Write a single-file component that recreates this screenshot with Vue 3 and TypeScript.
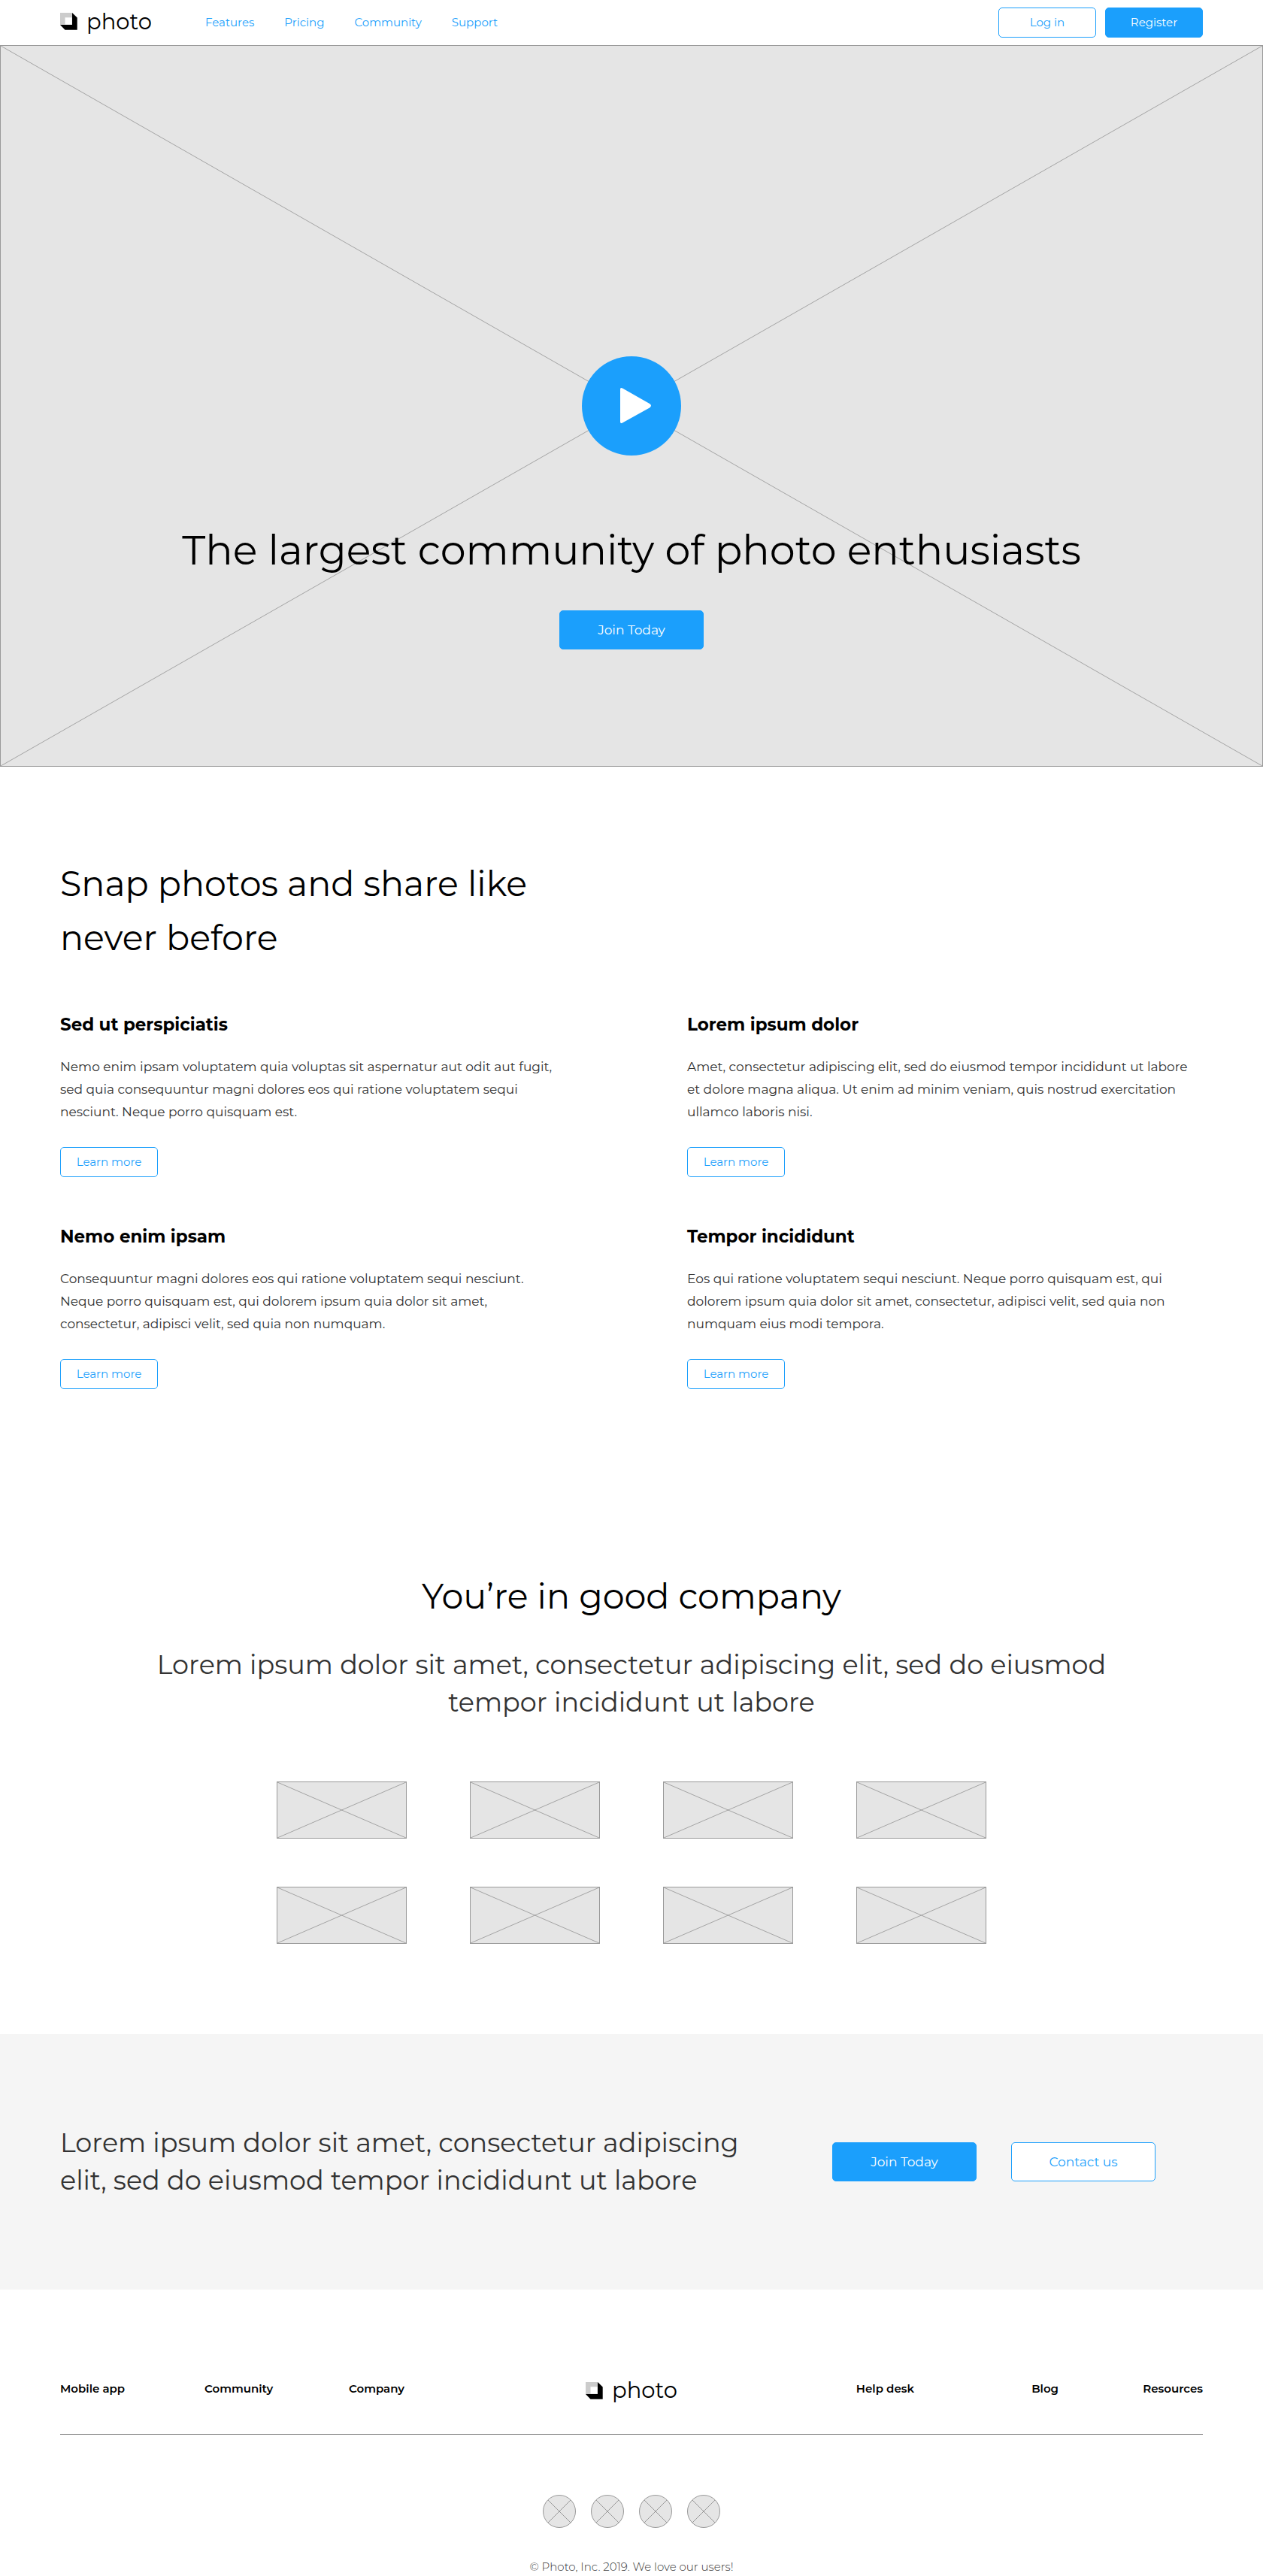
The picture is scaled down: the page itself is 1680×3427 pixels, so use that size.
<script setup lang="ts">
import { defineComponent, h } from 'vue'

interface Feature {
  title: string
  text: string
}

const navLinks: string[] = ['Features', 'Pricing', 'Community', 'Support']

const features: Feature[] = [
  {
    title: 'Sed ut perspiciatis',
    text: 'Nemo enim ipsam voluptatem quia voluptas sit aspernatur aut odit aut fugit, sed quia consequuntur magni dolores eos qui ratione voluptatem sequi nesciunt. Neque porro quisquam est.',
  },
  {
    title: 'Lorem ipsum dolor',
    text: 'Amet, consectetur adipiscing elit, sed do eiusmod tempor incididunt ut labore et dolore magna aliqua. Ut enim ad minim veniam, quis nostrud exercitation ullamco laboris nisi.',
  },
  {
    title: 'Nemo enim ipsam',
    text: 'Consequuntur magni dolores eos qui ratione voluptatem sequi nesciunt. Neque porro quisquam est, qui dolorem ipsum quia dolor sit amet, consectetur, adipisci velit, sed quia non numquam.',
  },
  {
    title: 'Tempor incididunt',
    text: 'Eos qui ratione voluptatem sequi nesciunt. Neque porro quisquam est, qui dolorem ipsum quia dolor sit amet, consectetur, adipisci velit, sed quia non numquam eius modi tempora.',
  },
]

const footerLeft: string[] = ['Mobile app', 'Community', 'Company']
const footerRight: string[] = ['Help desk', 'Blog', 'Resources']

// Isometric cube shared by the header and the footer.
const LogoMark = defineComponent({
  render: () =>
    h('svg', { width: 23, height: 23, viewBox: '0 0 23 23', 'aria-hidden': 'true' }, [
      h('path', { d: 'M0 0H16V16H0Z', fill: '#cccccc' }),
      h('path', { d: 'M16 0L22.7 6.5V22.7H6.5L0 16H16Z', fill: '#000000' }),
      h('path', { d: 'M6.5 6.3H15.7V15.6H6.5Z', fill: '#ffffff' }),
    ]),
})
</script>

<template>
  <div class="page">
    <header class="header">
      <a href="#" class="logo"><LogoMark /><span class="wordmark">photo</span></a>
      <nav class="nav">
        <a v-for="link in navLinks" :key="link" href="#">{{ link }}</a>
      </nav>
      <div class="header-actions">
        <button type="button" class="btn">Log in</button>
        <button type="button" class="btn primary">Register</button>
      </div>
    </header>

    <main>
      <section class="hero">
        <svg class="cross" viewBox="0 0 100 100" preserveAspectRatio="none" aria-hidden="true">
          <path d="M0 0L100 100M100 0L0 100" vector-effect="non-scaling-stroke" />
        </svg>
        <button type="button" class="play" aria-label="Play video">
          <svg width="132" height="132" viewBox="0 0 132 132" aria-hidden="true">
            <path d="M51 44Q51 41 54 42.500L90 63Q94 65.500 90 68.500L54 88.500Q51 90 51 87Z" fill="#ffffff" />
          </svg>
        </button>
        <h1>The largest community of photo enthusiasts</h1>
        <button type="button" class="btn large primary">Join Today</button>
      </section>

      <section class="features">
        <h2>Snap photos and share like never before</h2>
        <div class="feature-grid">
          <article v-for="feature in features" :key="feature.title">
            <h3>{{ feature.title }}</h3>
            <p>{{ feature.text }}</p>
            <button type="button" class="btn">Learn more</button>
          </article>
        </div>
      </section>

      <section class="company">
        <h2>You’re in good company</h2>
        <p class="lead">Lorem ipsum dolor sit amet, consectetur adipiscing elit, sed do eiusmod tempor incididunt ut labore</p>
        <div class="brands">
          <div v-for="n in 8" :key="n" class="brand">
            <svg class="cross" viewBox="0 0 100 100" preserveAspectRatio="none" aria-hidden="true">
              <path d="M0 0L100 100M100 0L0 100" vector-effect="non-scaling-stroke" />
            </svg>
          </div>
        </div>
      </section>

      <section class="cta">
        <p class="lead">Lorem ipsum dolor sit amet, consectetur adipiscing elit, sed do eiusmod tempor incididunt ut labore</p>
        <div class="cta-actions">
          <button type="button" class="btn large primary">Join Today</button>
          <button type="button" class="btn large">Contact us</button>
        </div>
      </section>
    </main>

    <footer class="footer">
      <nav class="footer-nav">
        <a v-for="link in footerLeft" :key="link" href="#">{{ link }}</a>
        <a href="#" class="logo"><LogoMark /><span class="wordmark">photo</span></a>
        <a v-for="link in footerRight" :key="link" href="#" class="end">{{ link }}</a>
      </nav>
      <div class="social">
        <a v-for="n in 4" :key="n" href="#" :aria-label="`Social profile ${n}`">
          <svg width="44" height="44" viewBox="0 0 44 44" aria-hidden="true">
            <circle cx="22" cy="22" r="21.5" fill="#e5e5e5" />
            <path d="M7 7L37 37M37 7L7 37" />
          </svg>
        </a>
      </div>
      <p class="copyright">© Photo, Inc. 2019. We love our users!</p>
    </footer>
  </div>
</template>

<style>
body {
  margin: 0;
  background: #ffffff;
}
</style>

<style scoped>
.page {
  font-family: Montserrat, Inter, "Open Sans", sans-serif;
  color: #000000;
}

h1,
h2,
h3,
p {
  margin: 0;
}

a {
  color: inherit;
  text-decoration: none;
}

svg {
  display: block;
}

.header {
  display: flex;
  align-items: center;
  height: 60px;
  padding: 0 80px;
}

.logo {
  display: flex;
  align-items: center;
  gap: 12px;
}

.header .logo {
  width: 193px;
  margin-bottom: 3px;
}

.wordmark {
  font-size: 29px;
  font-weight: 400;
  line-height: 24px;
}

.nav {
  display: flex;
  gap: 40px;
  color: #1b9ffc;
  font-size: 15px;
  line-height: 20px;
}

.header-actions {
  display: flex;
  gap: 12px;
  margin-left: auto;
}

.btn {
  box-sizing: border-box;
  width: 130px;
  height: 40px;
  padding: 0;
  border: 1px solid #1b9ffc;
  border-radius: 5px;
  background: #ffffff;
  color: #1b9ffc;
  font-family: inherit;
  font-size: 15px;
  line-height: 20px;
}

.btn.large {
  width: 192px;
  height: 52px;
  font-size: 17px;
}

.btn.primary {
  background: #1b9ffc;
  color: #ffffff;
}

.hero {
  position: relative;
  box-sizing: border-box;
  display: flex;
  flex-direction: column;
  align-items: center;
  min-height: 960px;
  padding-top: 413px;
  border: 1px solid #999999;
  background: #e5e5e5;
}

.cross {
  position: absolute;
  inset: 0;
  width: 100%;
  height: 100%;
}

.cross path {
  fill: none;
  stroke: #a3a3a3;
}

.play {
  position: relative;
  width: 132px;
  height: 132px;
  padding: 0;
  border: 0;
  border-radius: 50%;
  background: #1b9ffc;
}

h1 {
  position: relative;
  margin: 86px 0 40px;
  font-size: 54px;
  font-weight: 400;
  line-height: 80px;
  text-align: center;
}

.hero .btn {
  position: relative;
}

.features {
  padding: 120px 80px;
}

h2 {
  font-size: 46px;
  font-weight: 400;
  line-height: 72px;
}

.features h2 {
  max-width: 686px;
}

.feature-grid {
  display: grid;
  grid-template-columns: 1fr 1fr;
  gap: 61px 148px;
  margin-top: 61px;
}

h3 {
  font-size: 23px;
  font-weight: 700;
  line-height: 36px;
}

.feature-grid p {
  max-width: 673px;
  margin: 23px 0 32px;
  color: #333333;
  font-size: 17px;
  line-height: 30px;
}

.company {
  display: flex;
  flex-direction: column;
  align-items: center;
  padding: 120px 80px;
  text-align: center;
}

.lead {
  color: #333333;
  font-size: 35px;
  line-height: 50px;
}

.company .lead {
  max-width: 1300px;
  margin-top: 30px;
}

.brands {
  display: grid;
  grid-template-columns: repeat(4, 1fr);
  gap: 64px 84px;
  width: 100%;
  max-width: 944px;
  margin-top: 80px;
}

.brand {
  position: relative;
  box-sizing: border-box;
  height: 76px;
  border: 1px solid #999999;
  background: #e5e5e5;
}

.cta {
  display: flex;
  align-items: center;
  justify-content: space-between;
  padding: 120px 143px 120px 80px;
  background: #f5f5f5;
}

.cta .lead {
  flex: 0 1 930px;
}

.cta-actions {
  display: flex;
  gap: 46px;
}

.footer {
  padding: 122px 80px 2px;
}

.footer-nav {
  display: grid;
  grid-template-columns: repeat(8, 1fr);
  column-gap: 16px;
  align-items: start;
  padding-bottom: 46px;
  border-bottom: 1px solid #808080;
  font-size: 15px;
  font-weight: 600;
  line-height: 20px;
}

.footer-nav .logo {
  grid-column: span 2;
  justify-content: center;
}

.end {
  text-align: right;
}

.social {
  display: flex;
  justify-content: center;
  gap: 20px;
  margin-top: 80px;
}

.social svg {
  stroke: #999999;
}

.copyright {
  margin-top: 42px;
  color: #333333;
  font-size: 15px;
  font-weight: 300;
  line-height: 20px;
  text-align: center;
}
</style>
